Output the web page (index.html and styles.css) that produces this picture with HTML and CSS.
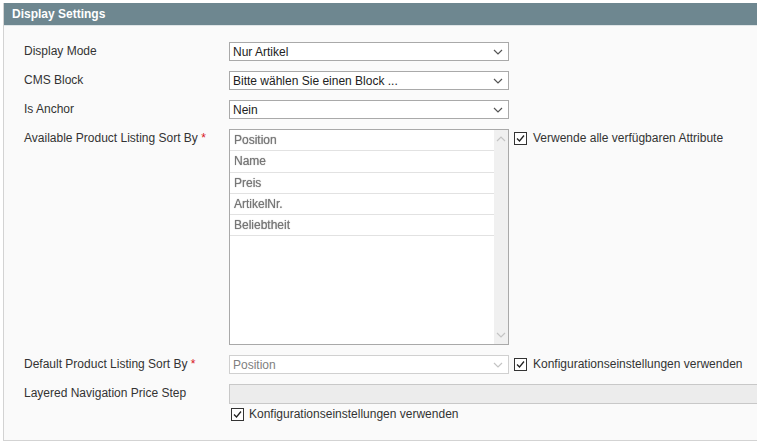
FILE: index.html
```html
<!DOCTYPE html>
<html lang="en">
<head>
    <meta charset="UTF-8">
    <title>Display Settings</title>
    <link rel="stylesheet" href="styles.css">
</head>
<body>
    <div class="fieldset">
        <div class="legend">Display Settings</div>

        <div class="content">
            <div class="row">
                <label class="row-label">Display Mode</label>
                <div class="select">
                    <span>Nur Artikel</span>
                    <svg class="arrow" width="10" height="6" viewBox="0 0 10 6"><polyline points="1,1 5,5 9,1" fill="none" stroke="#555" stroke-width="1.2"/></svg>
                </div>
            </div>

            <div class="row">
                <label class="row-label">CMS Block</label>
                <div class="select">
                    <span>Bitte wählen Sie einen Block ...</span>
                    <svg class="arrow" width="10" height="6" viewBox="0 0 10 6"><polyline points="1,1 5,5 9,1" fill="none" stroke="#555" stroke-width="1.2"/></svg>
                </div>
            </div>

            <div class="row">
                <label class="row-label">Is Anchor</label>
                <div class="select">
                    <span>Nein</span>
                    <svg class="arrow" width="10" height="6" viewBox="0 0 10 6"><polyline points="1,1 5,5 9,1" fill="none" stroke="#555" stroke-width="1.2"/></svg>
                </div>
            </div>

            <div class="row">
                <label class="row-label">Available Product Listing Sort By <span class="required">*</span></label>
                <div class="multiselect">
                    <ul class="options">
                        <li><span>Position</span></li>
                        <li><span>Name</span></li>
                        <li><span>Preis</span></li>
                        <li><span>ArtikelNr.</span></li>
                        <li><span>Beliebtheit</span></li>
                    </ul>
                    <div class="scrollbar">
                        <svg width="10" height="6" viewBox="0 0 10 6"><polyline points="1,5 5,1 9,5" fill="none" stroke="#c4c4c4" stroke-width="1.2"/></svg>
                        <svg width="10" height="6" viewBox="0 0 10 6"><polyline points="1,1 5,5 9,1" fill="none" stroke="#c4c4c4" stroke-width="1.2"/></svg>
                    </div>
                </div>
                <div class="use-default">
                    <svg class="check" width="13" height="13" viewBox="0 0 13 13"><rect x="0.5" y="0.5" width="12" height="12" fill="#fff" stroke="#333"/><polyline points="3,6.5 5.5,9 10,3.5" fill="none" stroke="#222" stroke-width="1.3"/></svg>
                    <span>Verwende alle verfügbaren Attribute</span>
                </div>
            </div>

            <div class="row row-default">
                <label class="row-label">Default Product Listing Sort By <span class="required">*</span></label>
                <div class="select disabled">
                    <span>Position</span>
                    <svg class="arrow" width="10" height="6" viewBox="0 0 10 6"><polyline points="1,1 5,5 9,1" fill="none" stroke="#c4c4c4" stroke-width="1.2"/></svg>
                </div>
                <div class="use-default">
                    <svg class="check" width="13" height="13" viewBox="0 0 13 13"><rect x="0.5" y="0.5" width="12" height="12" fill="#fff" stroke="#333"/><polyline points="3,6.5 5.5,9 10,3.5" fill="none" stroke="#222" stroke-width="1.3"/></svg>
                    <span>Konfigurationseinstellungen verwenden</span>
                </div>
            </div>

            <div class="row row-price">
                <label class="row-label">Layered Navigation Price Step</label>
                <div class="field-wide">
                    <div class="text-input disabled"></div>
                    <div class="use-default under">
                        <svg class="check" width="13" height="13" viewBox="0 0 13 13"><rect x="0.5" y="0.5" width="12" height="12" fill="#fff" stroke="#333"/><polyline points="3,6.5 5.5,9 10,3.5" fill="none" stroke="#222" stroke-width="1.3"/></svg>
                        <span>Konfigurationseinstellungen verwenden</span>
                    </div>
                </div>
            </div>
        </div>
    </div>
</body>
</html>
```

FILE: styles.css
```css
body {
    margin: 0;
    background-color: #fff;
    font-family: "Liberation Sans", Arial, sans-serif;
    font-size: 12px;
    color: #333;
    overflow: hidden;
}
.fieldset {
    margin: 3px 0 0 3px;
    border-left: 1px solid #d3d3d3;
    border-bottom: 1px solid #d3d3d3;
    background-color: #fafafa;
}
.legend {
    height: 22px;
    line-height: 22px;
    padding-left: 8px;
    background-color: #6e8790;
    border-bottom: 1px solid #dfe5e7;
    color: #fff;
    font-weight: bold;
    font-size: 12px;
}
.content {
    padding: 16px 0 16px 20px;
}
.row {
    display: flex;
    align-items: flex-start;
    margin-bottom: 10px;
}
.row:last-child {
    margin-bottom: 0;
}
.row-label {
    width: 205px;
    flex-shrink: 0;
    line-height: 19px;
}
.required {
    color: #d8151d;
}
.select {
    box-sizing: border-box;
    width: 280px;
    height: 19px;
    border: 1px solid #a9a9a9;
    background-color: #fff;
    display: flex;
    align-items: center;
    justify-content: space-between;
    padding: 0 5px 0 3px;
    color: #222;
}
.select.disabled {
    border-color: #d0d0d0;
    color: #808080;
}
.multiselect {
    box-sizing: border-box;
    width: 280px;
    height: 216px;
    border: 1px solid #a9a9a9;
    background-color: #fff;
    display: flex;
}
.options {
    list-style: none;
    margin: 0;
    padding: 0;
    flex: 1;
}
.options li {
    height: 20.3px;
    line-height: 20px;
    padding-left: 4px;
    border-bottom: 1px solid #e2e2e2;
}
.options li span {
    display: inline-block;
    color: #777;
    text-shadow: 0 0 1px #888;
    filter: blur(0.5px);
}
.scrollbar {
    width: 14px;
    background-color: #f0f0f0;
    display: flex;
    flex-direction: column;
    justify-content: space-between;
    align-items: center;
    padding: 6px 0;
}
.use-default {
    display: flex;
    align-items: center;
    gap: 6px;
    margin-left: 5px;
    line-height: 19px;
    color: #333;
}
.check {
    display: block;
    flex-shrink: 0;
}
.row-default {
    margin-top: 1px;
}
.field-wide {
    flex: 1;
}
.text-input {
    box-sizing: border-box;
    height: 20px;
    border: 1px solid #c8c8c8;
    border-right: none;
    background-color: #ececec;
}
.use-default.under {
    margin: 1px 0 0 2px;
    gap: 5px;
}
```
